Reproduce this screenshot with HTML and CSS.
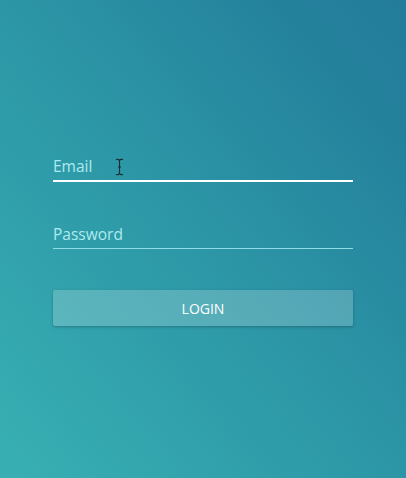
FILE: index.html
```html
<!DOCTYPE html>
<html>
<head>
<meta charset="utf-8">
<link rel="stylesheet" href="styles.css">
</head>
<body>
<div class="page">
  <form class="login-form">
    <div class="field field-focused">
      <span class="field-label">Email</span>
      <svg class="cursor" width="9" height="18" viewBox="0 0 9 18"><path d="M1 1.5 Q4.5 1 4.5 3 L4.5 15 Q4.5 17 1 16.5 M8 1.5 Q4.5 1 4.5 3 M4.5 15 Q4.5 17 8 16.5 M3 9 H6" fill="none" stroke="#1c2c33" stroke-width="1.1"/></svg>
    </div>
    <div class="field">
      <span class="field-label">Password</span>
    </div>
    <button type="button" class="btn-login">LOGIN</button>
  </form>
</div>
</body>
</html>
```
FILE: styles.css
```css
html, body {
  margin: 0;
  padding: 0;
}
body {
  width: 406px;
  height: 478px;
  overflow: hidden;
  font-family: "Open Sans", "Noto Sans", sans-serif;
  background: linear-gradient(to top right, #38b0b3 0%, #2c96a6 50%, #24819c 85%, #227c9a 100%);
}
.page {
  height: 478px;
  padding-top: 155px;
  box-sizing: border-box;
}
.login-form {
  width: 300px;
  margin-left: 53px;
  display: flex;
  flex-direction: column;
}
.field {
  position: relative;
  height: 25px;
  border-bottom: 1px solid #8fdde6;
}
.field-focused {
  border-bottom: 2px solid #ffffff;
  margin-bottom: 41px;
}
.field-label {
  display: block;
  font-size: 15.5px;
  line-height: 22px;
  color: #b0eaf0;
}
.cursor {
  position: absolute;
  left: 62px;
  top: 3px;
}
.btn-login {
  margin-top: 41px;
  height: 36px;
  width: 300px;
  border: none;
  border-radius: 2px;
  background: rgba(255, 255, 255, 0.2);
  box-shadow: 0 1px 3px rgba(0, 0, 0, 0.25);
  color: #ffffff;
  font-family: "Open Sans", "Noto Sans", sans-serif;
  font-size: 14px;
  padding: 0;
}
```
